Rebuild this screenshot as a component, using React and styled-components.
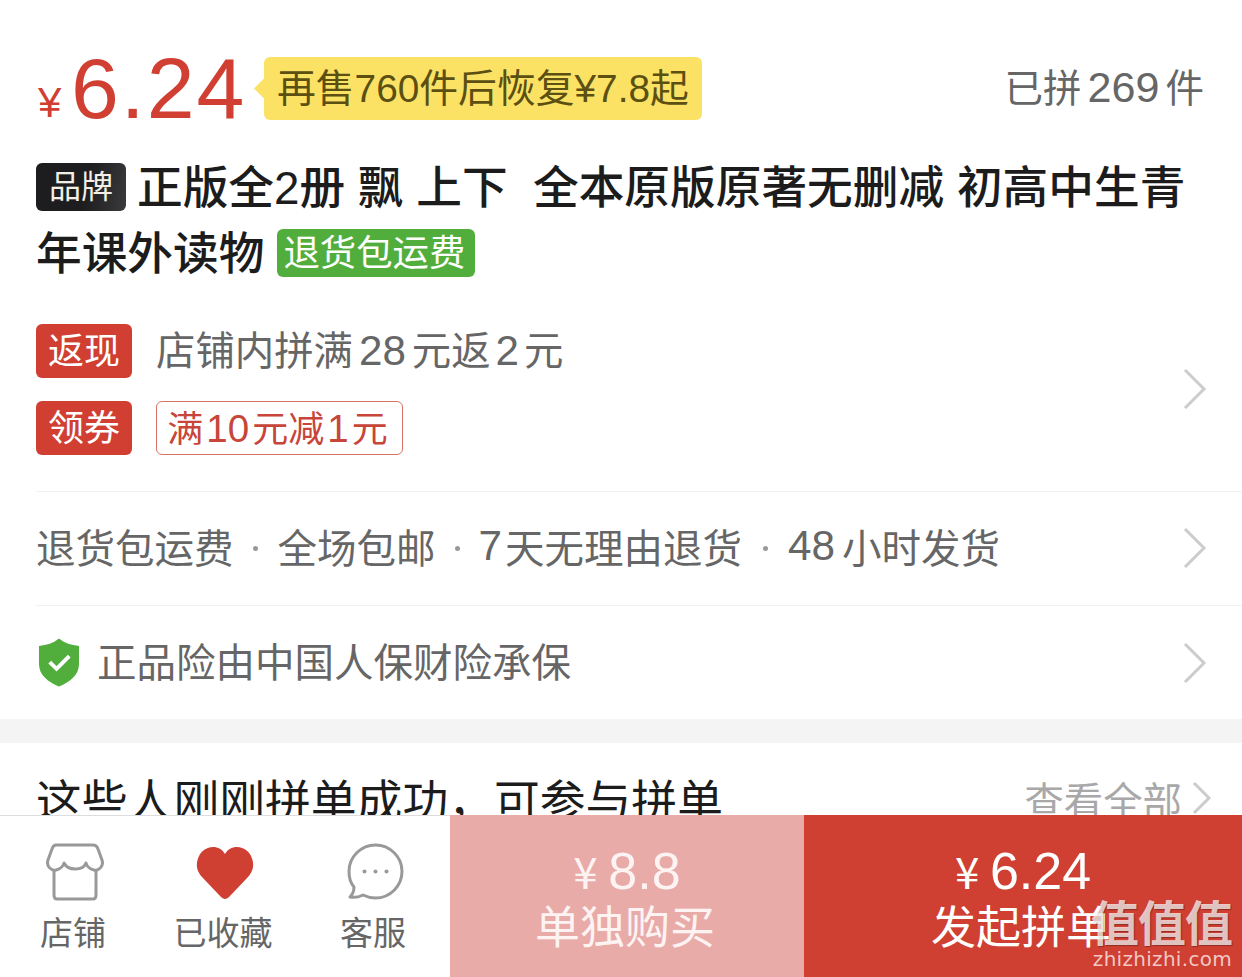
import React from "react";
import styled, { createGlobalStyle } from "styled-components";

const Global = createGlobalStyle`
  html, body {
    margin: 0;
    background: #fff;
    font-family: "Liberation Sans", "Noto Sans CJK SC", sans-serif;
  }
`;

const Page = styled.div`
  position: relative;
  width: 1242px;
  height: 977px;
  overflow: hidden;
  background: #fff;
`;

const Num = styled.span`
  font-size: ${(p) => p.$size ?? 1.07}em;
  margin: 0 ${(p) => p.$m}px 0 ${(p) => p.$l ?? p.$m}px;
`;

const PriceRow = styled.div`
  display: flex;
  align-items: center;
  height: 63px;
  padding: 57px 38px 0 38px;
`;

const Yen = styled.span`
  font-size: 42px;
  line-height: 38px;
  color: #d03f32;
  align-self: flex-end;
  margin-bottom: -2px;
  width: 33px;
`;

const BigPrice = styled.span`
  font-size: 86px;
  line-height: 63px;
  letter-spacing: 2px;
  color: #d03f32;
  width: 193px;
`;

const Bubble = styled.div`
  position: relative;
  height: 63px;
  line-height: 63px;
  padding: 0 13px 0 13px;
  border-radius: 6px;
  background: #fbe265;
  color: #5c4f12;
  font-size: 38.8px;
  white-space: nowrap;
  &::before {
    content: "";
    position: absolute;
    left: -7px;
    top: 24px;
    width: 15px;
    height: 15px;
    background: #fbe265;
    transform: rotate(45deg);
  }
`;

const Sold = styled.div`
  margin-left: auto;
  padding-bottom: 8px;
  font-size: 38.5px;
  color: #666;
  white-space: nowrap;
`;

const Title = styled.div`
  margin-top: 34px;
  padding: 0 36px;
  font-size: 45.7px;
  line-height: 66px;
  font-weight: 500;
  color: #1c1c1c;
  white-space: nowrap;
`;

const TitleLine = styled.div`
  display: flex;
  align-items: center;
  height: 66px;
  white-space: pre;
`;

const TitleText = styled.span`
  padding-top: 4px;
`;

const BrandTag = styled.span`
  width: 90px;
  height: 48px;
  line-height: 48px;
  margin-right: 11px;
  border-radius: 6px;
  background: linear-gradient(100deg, #1d1d20 55%, #3a3a3c);
  color: #f3efe6;
  font-size: 32px;
  font-weight: 400;
  text-align: center;
`;

const GreenTag = styled.span`
  box-sizing: border-box;
  width: 198px;
  height: 48px;
  line-height: 50px;
  margin-left: 13px;
  padding-right: 4px;
  border-radius: 6px;
  background: #52ae3c;
  color: #fff;
  font-size: 36.4px;
  font-weight: 400;
  text-align: center;
`;

const Promo = styled.div`
  position: relative;
  display: flex;
  flex-direction: column;
  gap: 23px;
  padding: 38px 0 36px 36px;
`;

const PromoRow = styled.div`
  display: flex;
  align-items: center;
  height: 54px;
`;

const RedTag = styled.span`
  width: 96px;
  height: 54px;
  line-height: 55px;
  margin-right: 24px;
  border-radius: 6px;
  background: #d03f32;
  color: #fff;
  font-size: 36px;
  text-align: center;
`;

const PromoText = styled.span`
  padding-bottom: 8px;
  font-size: 39.4px;
  color: #666;
  white-space: pre;
`;

const Coupon = styled.span`
  box-sizing: border-box;
  width: 247px;
  height: 54px;
  line-height: 54px;
  padding-right: 4px;
  border: 1px solid #d5736a;
  border-radius: 6px;
  color: #c8453a;
  font-size: 36px;
  text-align: center;
  white-space: pre;
`;

const Row = styled.div`
  display: flex;
  align-items: center;
  box-sizing: border-box;
  height: 114px;
  margin-left: 36px;
  padding-bottom: 6px;
  border-top: 1px solid #f2f2f2;
  font-size: 39.5px;
  color: #666;
  white-space: pre;
`;

const Dot = styled.span`
  width: ${(p) => p.$w}px;
  text-align: center;
  &::before {
    content: "";
    display: inline-block;
    width: 5px;
    height: 5px;
    border-radius: 50%;
    background: #999;
    vertical-align: middle;
  }
`;

const ChevronSvg = styled.svg`
  position: absolute;
  right: 35px;
  top: ${(p) => p.$top}px;
  width: 24px;
  height: 42px;
`;

const RowWrap = styled.div`
  position: relative;
`;

const ShieldSvg = styled.svg`
  width: 42px;
  height: 49px;
  margin: 6px 17px 0 2px;
`;

const Band = styled.div`
  height: 24px;
  background: #f4f4f4;
`;

const Section = styled.div`
  display: flex;
  align-items: center;
  justify-content: space-between;
  padding: 22px 30px 0 36px;
  height: 66px;
`;

const SectionTitle = styled.div`
  font-size: 45.8px;
  color: #1c1c1c;
  white-space: nowrap;
`;

const SeeAll = styled.div`
  display: flex;
  align-items: center;
  gap: 10px;
  font-size: 39.4px;
  color: #a8a8a8;
`;

const SmallChevron = styled.svg`
  width: 20px;
  height: 34px;
`;

const BottomBar = styled.div`
  position: absolute;
  left: 0;
  right: 0;
  bottom: 0;
  height: 162px;
  display: grid;
  grid-template-columns: 450px 354px 438px;
`;

const Tabs = styled.div`
  display: grid;
  grid-template-columns: repeat(3, 150px);
  box-sizing: border-box;
  background: #fff;
  border-top: 1px solid #ddd;
`;

const Tab = styled.div`
  display: flex;
  flex-direction: column;
  align-items: center;
  padding-top: 27px;
`;

const TabIcon = styled.svg`
  width: 58px;
  height: 58px;
`;

const TabLabel = styled.div`
  margin: 11px 4px 0 0;
  font-size: 33px;
  line-height: 44px;
  color: #666;
  white-space: nowrap;
`;

const BuyButton = styled.div`
  display: flex;
  flex-direction: column;
  align-items: center;
  padding-top: 29px;
  background: ${(p) => (p.$primary ? "#cf3f32" : "#e8aba8")};
  color: ${(p) => (p.$primary ? "#fff" : "#fdf3f2")};
`;

const BuyPrice = styled.div`
  font-size: 52px;
  line-height: 52px;
  white-space: pre;
`;

const BuyYen = styled.span`
  display: inline-block;
  width: 35px;
  font-size: 44px;
  font-family: "Noto Sans CJK SC", sans-serif;
`;

const BuyLabel = styled.div`
  margin: 4px 4px 0 0;
  font-size: 45px;
  line-height: 56px;
  white-space: nowrap;
`;

const Watermark = styled.div`
  position: absolute;
  right: 10px;
  bottom: 6px;
  width: 142px;
  display: flex;
  flex-direction: column;
  align-items: flex-end;
  pointer-events: none;
`;

const WatermarkMark = styled.div`
  font-family: "Noto Sans CJK SC", sans-serif;
  font-size: 48px;
  line-height: 54px;
  font-weight: 700;
  letter-spacing: -1px;
  color: rgba(255, 255, 255, 0.72);
  text-shadow: 1px 1px 1px rgba(0, 0, 0, 0.3);
  white-space: nowrap;
`;

const WatermarkUrl = styled.div`
  font-family: "DejaVu Sans", sans-serif;
  font-size: 20px;
  line-height: 24px;
  letter-spacing: 0.3px;
  color: rgba(255, 255, 255, 0.72);
  white-space: nowrap;
`;

const Chevron = ({ top }) => (
  <ChevronSvg $top={top} viewBox="0 0 24 42" fill="none">
    <path d="M2 2 L21 21 L2 40" stroke="#ccc" strokeWidth="3" />
  </ChevronSvg>
);

const App = () => (
  <Page>
    <Global />
    <PriceRow>
      <Yen>¥</Yen>
      <BigPrice>6.24</BigPrice>
      <Bubble>再售760件后恢复¥7.8起</Bubble>
      <Sold>已拼<Num $m={6} $size={1.12}>269</Num>件</Sold>
    </PriceRow>

    <Title>
      <TitleLine>
        <BrandTag>品牌</BrandTag>
        <TitleText>正版全2册 飘 上下  全本原版原著无删减 初高中生青</TitleText>
      </TitleLine>
      <TitleLine>
        <TitleText>年课外读物</TitleText>
        <GreenTag>退货包运费</GreenTag>
      </TitleLine>
    </Title>

    <Promo>
      <PromoRow>
        <RedTag>返现</RedTag>
        <PromoText>店铺内拼满<Num $m={6}>28</Num>元返<Num $m={5}>2</Num>元</PromoText>
      </PromoRow>
      <PromoRow>
        <RedTag>领券</RedTag>
        <Coupon>满<Num $m={3}>10</Num>元减<Num $m={3}>1</Num>元</Coupon>
      </PromoRow>
      <Chevron top={82} />
    </Promo>

    <RowWrap>
      <Row>
        退货包运费
        <Dot $w={44} />
        全场包邮
        <Dot $w={43} />
        <Num $l={0} $m={3}>7</Num>天无理由退货
        <Dot $w={46} />
        <Num $l={0} $m={7}>48</Num>小时发货
      </Row>
      <Chevron top={36} />
    </RowWrap>

    <RowWrap>
      <Row>
        <ShieldSvg viewBox="0 0 43 49">
          <path
            d="M21.5 0 C27 4.5 34 7 42 7.5 L42 26 C42 37 33 44.5 21.5 49 C10 44.5 1 37 1 26 L1 7.5 C9 7 16 4.5 21.5 0 Z"
            fill="#52ae3c"
          />
          <path d="M12 24 L19 31 L32 18" fill="none" stroke="#fff" strokeWidth="4" />
        </ShieldSvg>
        正品险由中国人保财险承保
      </Row>
      <Chevron top={37} />
    </RowWrap>

    <Band />

    <Section>
      <SectionTitle>这些人刚刚拼单成功，可参与拼单</SectionTitle>
      <SeeAll>
        查看全部
        <SmallChevron viewBox="0 0 20 34" fill="none">
          <path d="M2 2 L17 17 L2 32" stroke="#ccc" strokeWidth="3" />
        </SmallChevron>
      </SeeAll>
    </Section>

    <BottomBar>
      <Tabs>
        <Tab>
          <TabIcon viewBox="0 0 58 58" fill="none" stroke="#999" strokeWidth="3" strokeLinejoin="round">
            <path d="M10 2 H47 C49 2 51 3 52 6 L56 17 C58 23 53 28 48 27 C44 26 41 24 40 20 C37 28 22 28 18 20 C17 24 14 26 10 27 C5 28 0 23 2 17 L6 6 C7 3 8 2 10 2 Z" />
            <path d="M8 27 V52 C8 55 9 56 11 56 H47 C49 56 50 55 50 52 V27" />
          </TabIcon>
          <TabLabel>店铺</TabLabel>
        </Tab>
        <Tab>
          <TabIcon viewBox="0 0 58 58">
            <path
              d="M29 56 C27.5 56 26 55 24.5 53.5 L6 34 C1 28.5 0 23 1.5 17 C3.5 9 10 4 17 4 C22 4 26.5 6.5 29 11 C31.5 6.5 36 4 41 4 C48 4 54.5 9 56.5 17 C58 23 57 28.5 52 34 L33.5 53.5 C32 55 30.5 56 29 56 Z"
              fill="#cf3f32"
            />
          </TabIcon>
          <TabLabel>已收藏</TabLabel>
        </Tab>
        <Tab>
          <TabIcon viewBox="0 0 58 58" fill="none">
            <path
              d="M29.5 2 C44 2 56 14 56 28.5 C56 43 44 55 29.5 55 C25 55 21 54 17 52 C13 54 9 55 4 54 C7 51 8 48 8 44 C4.5 40 3 34 3 28.5 C3 14 15 2 29.5 2 Z"
              stroke="#999"
              strokeWidth="3"
              strokeLinejoin="round"
            />
            <circle cx="18.5" cy="28.5" r="2" fill="#999" />
            <circle cx="29.5" cy="28.5" r="2" fill="#999" />
            <circle cx="40.5" cy="28.5" r="2" fill="#999" />
          </TabIcon>
          <TabLabel>客服</TabLabel>
        </Tab>
      </Tabs>
      <BuyButton>
        <BuyPrice>
          <BuyYen>¥</BuyYen>8.8
        </BuyPrice>
        <BuyLabel>单独购买</BuyLabel>
      </BuyButton>
      <BuyButton $primary>
        <BuyPrice>
          <BuyYen>¥</BuyYen>6.24
        </BuyPrice>
        <BuyLabel>发起拼单</BuyLabel>
      </BuyButton>
    </BottomBar>

    <Watermark>
      <WatermarkMark>值值值</WatermarkMark>
      <WatermarkUrl>zhizhizhi.com</WatermarkUrl>
    </Watermark>
  </Page>
);

export default App;
